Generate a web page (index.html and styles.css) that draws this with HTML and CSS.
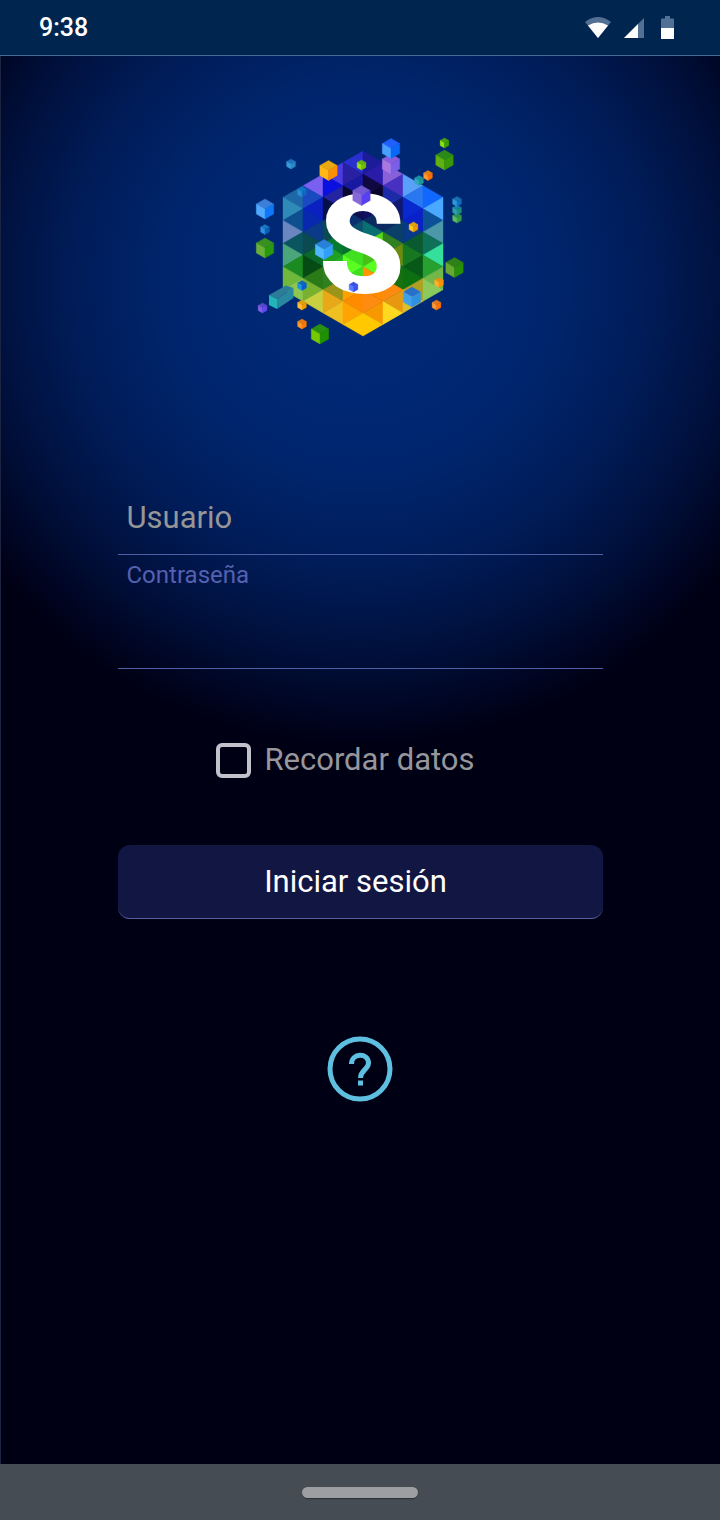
FILE: index.html
```html
<!DOCTYPE html>
<html lang="es">
<head>
    <meta charset="UTF-8">
    <meta name="viewport" content="width=device-width, initial-scale=1">
    <title>Iniciar sesión</title>
    <link rel="stylesheet" href="styles.css">
</head>
<body>

<header class="status-bar">
    <span class="time">9:38</span>
    <div class="status-icons">
        <svg width="26" height="21" viewBox="0 0 26 21">
            <path d="M0 5Q13-5 26 5L13 21z" fill="#526f94"/>
            <path d="M3 8.500Q13 2.500 23 8.500L13 21z" fill="#fff"/>
        </svg>
        <svg width="20" height="20" viewBox="0 0 20 20">
            <path d="M20 0V20H0z" fill="#526f94"/>
            <path d="M14 6V20H0z" fill="#fff"/>
        </svg>
        <svg width="13" height="23" viewBox="0 0 13 23">
            <path d="M4 0h5v2.500h3q1 0 1 1V12H0V3.500q0-1 1-1h3z" fill="#526f94"/>
            <path d="M0 12h13v11H0z" fill="#fff"/>
        </svg>
    </div>
</header>

<main class="screen">
    <svg class="logo" viewBox="255 136 210 210" role="img" aria-label="Logo">
        <g id="mosaic"></g>
        <text class="logo-letter" x="362" y="293" text-anchor="middle">S</text>
        <g id="cubes"></g>
        <g>
            <path d="M269 295L286 285.500L293.500 288L277 299z" fill="#2a7c98"/>
            <path d="M277 299L293.500 288V298L277 309z" fill="#2788a0"/>
            <path d="M269 295L277 299V309L269 305z" fill="#22b4b8"/>
        </g>
    </svg>

    <form class="login" onsubmit="return false">
        <div class="field">
            <input type="text" id="user" placeholder="Usuario" aria-label="Usuario">
        </div>
        <div class="field">
            <label for="password">Contraseña</label>
            <input type="password" id="password">
        </div>

        <div class="remember">
            <input type="checkbox" id="remember">
            <label for="remember">Recordar datos</label>
        </div>

        <button type="submit" class="btn-login">Iniciar sesión</button>
    </form>

    <button type="button" class="btn-help" aria-label="Ayuda">
        <svg viewBox="0 0 66 66">
            <circle cx="33" cy="33" r="30" fill="none" stroke="#5fbfe0" stroke-width="5"/>
            <path d="M24.500 28C24.500 16.500 41.500 16.500 41.500 27C41.500 33.500 33.500 34 33.500 42" fill="none" stroke="#5fbfe0" stroke-width="5"/>
            <path d="M31 44.500h5v5h-5z" fill="#5fbfe0"/>
        </svg>
    </button>
</main>

<footer class="nav-bar"><span class="nav-handle"></span></footer>

<script src="logo.js"></script>
</body>
</html>
```

FILE: styles.css
```css
* { box-sizing: border-box; }
body {
    margin: 0;
    min-height: 100vh;
    display: flex;
    flex-direction: column;
    font-family: Roboto, sans-serif;
    background: #000014;
    color: #fff;
}
button, input { font-family: inherit; }

.status-bar {
    display: flex;
    justify-content: space-between;
    align-items: center;
    height: 56px;
    padding: 0 46px 0 39px;
    background: #00264f;
    border-bottom: 1px solid #456a98;
}
.time { font-size: 25px; font-weight: 500; }
.status-icons { display: flex; align-items: center; gap: 17px; }
.status-icons svg:first-child { margin-right: -4px; }

.screen {
    flex: 1;
    display: flex;
    flex-direction: column;
    align-items: center;
    padding-top: 80px;
    box-shadow: inset 1px 0 #1c2440;
    background: radial-gradient(circle 465px at 50% 225px, #002a78 0%, #002670 38%, #001c58 62%, #00103c 80%, #000522 93%, #000014 100%);
}
.logo { width: 210px; height: 210px; }
.logo-letter {
    font-size: 138px;
    font-weight: 900;
    fill: #fff;
}

.login {
    width: calc(100% - 48px);
    max-width: 485px;
    margin-top: 134px;
}
.field {
    display: flex;
    flex-direction: column;
    border-bottom: 1px solid #4f5fa5;
}
.field label {
    padding: 6px 9px 0;
    font-size: 24px;
    line-height: 28px;
    color: #5560b0;
}
.field input {
    width: 100%;
    height: 74px;
    padding: 0 9px;
    font-size: 31px;
    color: #fff;
    background: none;
    border: none;
    outline: none;
}
.field input::placeholder { color: #969696; opacity: 1; }
.field label + input { height: 79px; }

.remember {
    display: flex;
    justify-content: center;
    align-items: center;
    gap: 13px;
    margin-top: 72px;
    padding-right: 29px;
    font-size: 31px;
    line-height: 38px;
    color: #96969c;
}
.remember input {
    appearance: none;
    width: 35px;
    height: 35px;
    margin: 0;
    border: 4px solid #c3c2cc;
    border-radius: 6px;
}
.remember input:checked { background: #5fbfe0; }

.btn-login {
    width: 100%;
    height: 74px;
    margin-top: 66px;
    padding: 0 9px 0 0;
    font-size: 31px;
    color: #fff;
    background: #121642;
    border: none;
    border-bottom: 1px solid #5560a0;
    border-radius: 12px;
    cursor: pointer;
}
.btn-help {
    width: 66px;
    height: 66px;
    margin-top: 117px;
    padding: 0;
    background: none;
    border: none;
    cursor: pointer;
}
.btn-help svg { display: block; }

.nav-bar {
    display: flex;
    justify-content: center;
    align-items: center;
    height: 56px;
    background: #454c53;
}
.nav-handle {
    width: 116px;
    height: 11px;
    border-radius: 6px;
    background: #9c9ea1;
    box-shadow: 0 1px 1px #2c3136;
}
```

FILE: logo.js
```javascript
const mosaic = document.getElementById("mosaic");
const cubes = document.getElementById("cubes");

// one row per column of the hexagon, triangles listed from top to bottom
const columns = [
    ["#1f68a8","#2f8ab8","#0d4f8f","#6a86c0","#0a5560","#4aa57a","#1b8a20","#6fb83c","#8cc850"],
    ["#7a60f0","#1a4ac0","#0a20c0","#0828b0","#0a3a88","#0a4a50","#0b6a28","#064a14","#2a7a18","#78b030","#c8d040"],
    ["#4a3ae0","#0a10e0","#2424a0","#05104a","#0a2a70","#0a4a50","#087a30","#20a020","#20b020","#308020","#9a9418","#e8a818","#f0c020"],
    ["#2a30d0","#2820a0","#1818a0","#0a0830","#101050","#0a3070","#0d5070","#087030","#40e020","#58ff20","#40e020","#ffa000","#ff8c00","#ffa400","#ffc800"],
    ["#1c1c98","#2a1ca8","#100840","#0a0428","#101060","#0a2a60","#087070","#58d818","#48c018","#58ff20","#ff9800","#ff8c00","#ff8c10","#f89800","#ffc800"],
    ["#8860d8","#4830c0","#1c2ca8","#101870","#0a2a60","#0a4068","#308020","#6a8a10","#186a10","#187010","#ff8a10","#e89810","#ffd820"],
    ["#58a0f8","#2a78f0","#0828d0","#0a20c8","#083888","#0a5a30","#187820","#085818","#0c7010","#b0a020","#d8c030"],
    ["#1068ff","#4aa8ff","#0c5098","#4a98a8","#0f7058","#35e09c","#28a030","#70b848","#8cca5c"]
];

// cx, cy, radius, top, left, right
const cubeList = [
    [291, 164, 5, "#1f70c0", "#3a9ad8", "#2888c8"],
    [302, 192, 5, "#1078c8", "#2890d0", "#1468c0"],
    [328.5, 170.5, 10, "#e8a810", "#ffb818", "#ff9000"],
    [265, 209, 10, "#3a80d8", "#50a8ff", "#1078f8"],
    [265, 229.5, 5, "#1878c0", "#3090e0", "#0860b8"],
    [265, 248, 10, "#389020", "#68b038", "#28980c"],
    [391, 164, 10, "#8a5ce0", "#a878e0", "#7a60e8"],
    [391, 148.5, 10, "#2060ff", "#48a0ff", "#0a68f8"],
    [361.5, 165, 5, "#60b010", "#98e010", "#70c000"],
    [361.5, 195.5, 10, "#7058d0", "#8868d8", "#5840f0"],
    [444.5, 143, 5, "#48a010", "#90e010", "#38a000"],
    [444.5, 160, 10, "#2a8a18", "#60b010", "#389808"],
    [428, 175.5, 5, "#e88010", "#ff9830", "#ff7000"],
    [419, 180.5, 5, "#1a90a0", "#30a8c0", "#209890"],
    [413.5, 227, 5, "#e0a010", "#ffc820", "#f09800"],
    [457, 218, 5, "#289050", "#60b868", "#30a040"],
    [457, 210, 5, "#1880a0", "#30a0a8", "#189080"],
    [457, 201.5, 5, "#1870b0", "#3098d8", "#1070c0"],
    [324, 249.5, 10, "#2880d8", "#50b8ff", "#30a0f8"],
    [353.5, 287, 5, "#3850e0", "#5878ff", "#3850f0"],
    [302, 285.5, 5, "#1068b0", "#2090e0", "#0060d0"],
    [302, 305, 5, "#e0a010", "#ffc030", "#f09800"],
    [302, 324, 5, "#e87810", "#ff9830", "#ff7800"],
    [262.5, 308, 5, "#5848c8", "#8060e8", "#6048f0"],
    [320, 334, 10, "#289010", "#78c800", "#209000"],
    [412, 297, 10, "#2870c8", "#40a0e8", "#3090e0"],
    [439, 282.5, 5, "#e89010", "#ffb030", "#ff9000"],
    [436.5, 305, 5, "#e07820", "#ff9830", "#ff7000"],
    [454.5, 267.5, 10, "#308018", "#68a830", "#289008"]
];

function addPolygon(parent, points, color) {
    const shape = document.createElementNS("http://www.w3.org/2000/svg", "polygon");
    shape.setAttribute("points", points.map(p => p.join(",")).join(" "));
    shape.setAttribute("fill", color);
    // thin stroke closes the seams between neighbours
    shape.setAttribute("stroke", color);
    shape.setAttribute("stroke-width", "0.4");
    parent.appendChild(shape);
}

const step = 185 / 16;
columns.forEach((colors, c) => {
    const left = 283 + c * 20, right = left + 20;
    // the side nearer the middle of the hexagon reaches higher
    const inner = c < 4 ? right : left;
    const outer = c < 4 ? left : right;
    const top = 151 + step * (c < 4 ? 3 - c : c - 4);
    colors.forEach((color, i) => {
        const a = i % 2 ? outer : inner;
        const b = i % 2 ? inner : outer;
        const y = top + i * step;
        addPolygon(mosaic, [[a, y], [b, y + step], [a, y + step * 2]], color);
    });
});

cubeList.forEach(([x, y, r, top, left, right]) => {
    const w = r * 0.87, h = r / 2;
    addPolygon(cubes, [[x, y - r], [x + w, y - h], [x, y], [x - w, y - h]], top);
    addPolygon(cubes, [[x - w, y - h], [x, y], [x, y + r], [x - w, y + h]], left);
    addPolygon(cubes, [[x + w, y - h], [x, y], [x, y + r], [x + w, y + h]], right);
});
```
